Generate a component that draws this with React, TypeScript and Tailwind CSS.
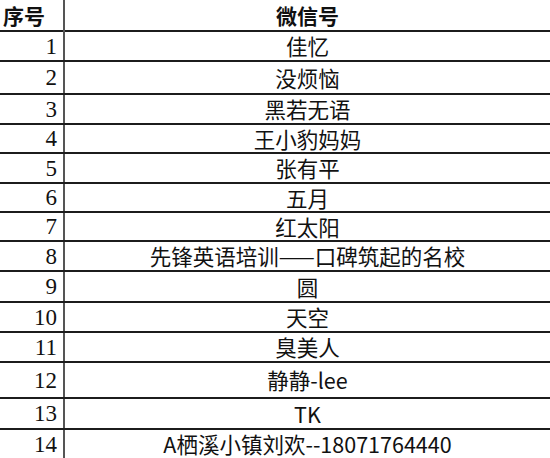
import React from 'react'

const rows = [
  { no: '1', name: '佳忆', h: 'h-[30px]' },
  { no: '2', name: '没烦恼', h: 'h-[33px]' },
  { no: '3', name: '黑若无语', h: 'h-[30px]' },
  { no: '4', name: '王小豹妈妈', h: 'h-[29px]' },
  { no: '5', name: '张有平', h: 'h-[30px]' },
  { no: '6', name: '五月', h: 'h-[29px]' },
  { no: '7', name: '红太阳', h: 'h-[29px]' },
  { no: '8', name: '先锋英语培训——口碑筑起的名校', h: 'h-[30px]' },
  { no: '9', name: '圆', h: 'h-[31px]' },
  { no: '10', name: '天空', h: 'h-[30px]' },
  { no: '11', name: '臭美人', h: 'h-[30px]' },
  { no: '12', name: '静静-lee', h: 'h-[36px]' },
  { no: '13', name: 'TK', h: 'h-[31px]' },
  { no: '14', name: 'A栖溪小镇刘欢--18071764440', h: 'h-[28px]' },
]

const App = () => {
  return (
    <div className="w-[550px] h-[458px] overflow-hidden bg-white text-[#111]">
      {/* header */}
      <div className="grid grid-cols-[65px_1fr] h-[32px] border-b-2 border-[#1c1c1c]">
        <div className="flex items-center pl-[3px] border-r-2 border-[#555] font-['Noto_Sans_CJK_SC',sans-serif] font-bold text-[21px]">
          序号
        </div>
        <div className="flex items-center justify-center font-['Noto_Sans_CJK_SC',sans-serif] font-bold text-[21px]">
          微信号
        </div>
      </div>

      {rows.map((r, i) => (
        <div
          key={r.no}
          className={`grid grid-cols-[65px_1fr] ${r.h} ${i < rows.length - 1 ? 'border-b-2 border-[#1c1c1c]' : ''}`}
        >
          <div className="flex items-center justify-end pr-[6px] border-r-2 border-[#555] font-['Liberation_Serif',serif] text-[23px] leading-none">
            {r.no}
          </div>
          <div className="flex items-center justify-center font-['Noto_Sans_CJK_SC',sans-serif] text-[21.5px] leading-none">
            {r.name}
          </div>
        </div>
      ))}
    </div>
  )
}

export default App
